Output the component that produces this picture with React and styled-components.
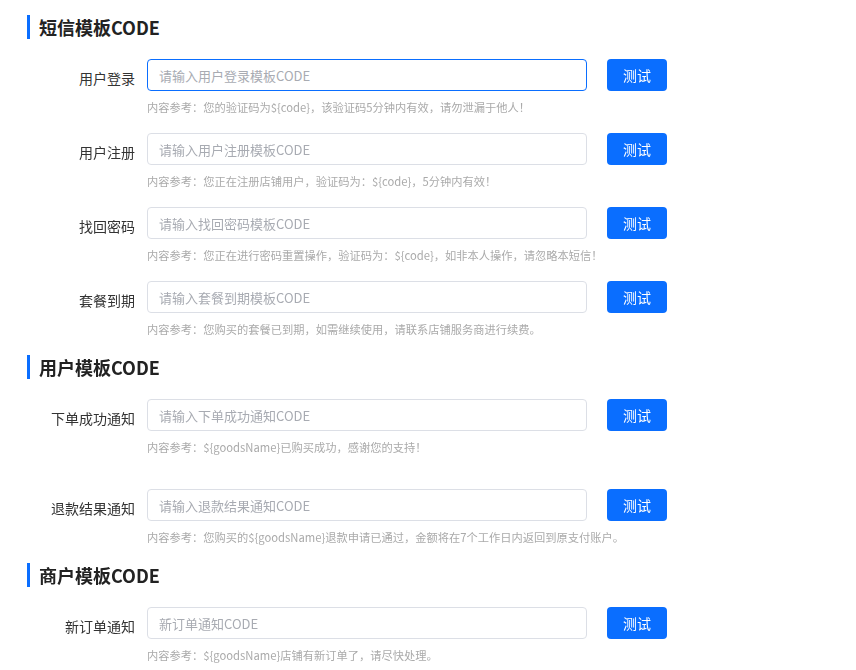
import React from "react";
import styled, { createGlobalStyle } from "styled-components";

const GlobalStyle = createGlobalStyle`
	body {
		margin: 0;
		background: #fff;
		font-family: "Noto Sans CJK SC", "Noto Sans", sans-serif;
		color: #333;
	}
`;

const sections = [
	{
		title: "短信模板CODE",
		rows: [
			{
				label: "用户登录",
				placeholder: "请输入用户登录模板CODE",
				hint: "内容参考：您的验证码为${code}，该验证码5分钟内有效，请勿泄漏于他人！",
				focused: true,
			},
			{
				label: "用户注册",
				placeholder: "请输入用户注册模板CODE",
				hint: "内容参考：您正在注册店铺用户，验证码为：${code}，5分钟内有效！",
			},
			{
				label: "找回密码",
				placeholder: "请输入找回密码模板CODE",
				hint: "内容参考：您正在进行密码重置操作，验证码为：${code}，如非本人操作，请忽略本短信！",
			},
			{
				label: "套餐到期",
				placeholder: "请输入套餐到期模板CODE",
				hint: "内容参考：您购买的套餐已到期，如需继续使用，请联系店铺服务商进行续费。",
			},
		],
	},
	{
		title: "用户模板CODE",
		rows: [
			{
				label: "下单成功通知",
				placeholder: "请输入下单成功通知CODE",
				hint: "内容参考：${goodsName}已购买成功，感谢您的支持！",
				spaced: true,
			},
			{
				label: "退款结果通知",
				placeholder: "请输入退款结果通知CODE",
				hint: "内容参考：您购买的${goodsName}退款申请已通过，金额将在7个工作日内返回到原支付账户。",
			},
		],
	},
	{
		title: "商户模板CODE",
		rows: [
			{
				label: "新订单通知",
				placeholder: "新订单通知CODE",
				hint: "内容参考：${goodsName}店铺有新订单了，请尽快处理。",
			},
		],
	},
];

function App() {
	return (
		<>
			<GlobalStyle />
			<Page>
				{sections.map((section) => (
					<Section key={section.title}>
						<Title>{section.title}</Title>
						{section.rows.map((row) => (
							<Row key={row.label} $spaced={row.spaced}>
								<Label>{row.label}</Label>
								<Field>
									<Line>
										<Input
											placeholder={row.placeholder}
											$focused={row.focused}
											autoFocus={row.focused}
										/>
										<TestBtn>测试</TestBtn>
									</Line>
									<Hint>{row.hint}</Hint>
								</Field>
							</Row>
						))}
					</Section>
				))}
			</Page>
		</>
	);
}

const Page = styled.div`
	padding: 15px 0 0 27px;
	width: 700px;
`;

const Section = styled.section`
	display: flex;
	flex-direction: column;
`;

const Title = styled.h2`
	margin: 0 0 20px;
	height: 24px;
	line-height: 24px;
	font-size: 18px;
	font-weight: 700;
	color: #222;
	border-left: 3px solid #0a6eff;
	padding-left: 9px;
`;

const Row = styled.div`
	display: flex;
	align-items: flex-start;
	margin-bottom: ${(p) => (p.$spaced ? "33px" : "17px")};
`;

const Label = styled.label`
	width: 120px;
	flex-shrink: 0;
	padding: 3px 12px 0 0;
	box-sizing: border-box;
	text-align: right;
	font-size: 14px;
	line-height: 32px;
	color: #333;
`;

const Field = styled.div`
	display: flex;
	flex-direction: column;
`;

const Line = styled.div`
	display: flex;
	align-items: center;
	gap: 20px;
`;

const Input = styled.input`
	width: 440px;
	height: 32px;
	box-sizing: border-box;
	padding: 0 11px;
	border: 1px solid ${(p) => (p.$focused ? "#0a6eff" : "#dcdfe6")};
	border-radius: 4px;
	font-family: inherit;
	font-size: 13px;
	color: #333;
	outline: none;

	&::placeholder {
		color: #a8abb2;
	}
`;

const TestBtn = styled.button`
	width: 60px;
	height: 32px;
	border: none;
	border-radius: 4px;
	background: #0a6eff;
	color: #fff;
	font-family: inherit;
	font-size: 14px;
	cursor: pointer;
`;

const Hint = styled.div`
	margin-top: 7px;
	font-size: 11.25px;
	line-height: 18px;
	color: #aaa;
`;

export default App;
